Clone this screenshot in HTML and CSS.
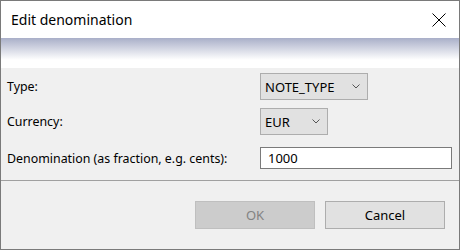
FILE: index.html
```html
<!DOCTYPE html>
<html lang="en">
<head>
    <meta charset="UTF-8">
    <title>Edit denomination</title>
    <link rel="stylesheet" href="styles.css">
</head>
<body>
    <div class="window">
        <div class="titlebar">
            <span class="title">Edit denomination</span>
            <svg class="close" width="14" height="14" viewBox="0 0 14 14">
                <path d="M0.5 0.5 L13.5 13.5 M13.5 0.5 L0.5 13.5" stroke="#000" stroke-width="1" fill="none"/>
            </svg>
        </div>
        <div class="banner"></div>

        <div class="form">
            <div class="row row-type">
                <label>Type:</label>
                <div class="select select-type">
                    <span>NOTE_TYPE</span>
                    <svg width="8" height="5" viewBox="0 0 8 5"><path d="M0.5 0.5 L4 4 L7.5 0.5" stroke="#555" fill="none"/></svg>
                </div>
            </div>
            <div class="row row-currency">
                <label>Currency:</label>
                <div class="select select-currency">
                    <span>EUR</span>
                    <svg width="8" height="5" viewBox="0 0 8 5"><path d="M0.5 0.5 L4 4 L7.5 0.5" stroke="#555" fill="none"/></svg>
                </div>
            </div>
            <div class="row row-denom">
                <label>Denomination (as fraction, e.g. cents):</label>
                <div class="textbox">1000</div>
            </div>
        </div>

        <div class="footer">
            <div class="button disabled">OK</div>
            <div class="button">Cancel</div>
        </div>
    </div>
</body>
</html>
```

FILE: styles.css
```css
body {
    margin: 0;
    font-family: "Noto Sans", sans-serif;
    color: #000;
}
.window {
    width: 460px;
    height: 250px;
    box-sizing: border-box;
    border: 1px solid #7a7a7a;
    background-color: #f0f0f0;
    display: flex;
    flex-direction: column;
}
.titlebar {
    height: 37px;
    background: white;
    display: flex;
    align-items: center;
    justify-content: space-between;
    padding: 0 13px 0 10px;
}
.title {
    font-size: 14px;
    margin-top: -1px;
}
.close {
    margin-top: 1px;
}
.banner {
    height: 30px;
    background: linear-gradient(#a9afc8, #ffffff 22px);
}
.form {
    height: 113px;
    box-sizing: border-box;
    padding: 5px 7px 0 6px;
    border-bottom: 1px solid #a0a0a0;
    font-size: 12.4px;
}
.row {
    display: flex;
    align-items: center;
}
.row label {
    width: 253px;
}
.row-type {
    height: 27px;
}
.row-currency {
    height: 27px;
    margin-top: 8px;
}
.row-denom {
    height: 22px;
    margin-top: 12px;
}
.select {
    height: 27px;
    box-sizing: border-box;
    border: 1px solid #adadad;
    background-color: #e1e1e1;
    display: flex;
    align-items: center;
    justify-content: space-between;
    padding: 0 7px 0 4px;
    font-size: 13px;
}
.select-type {
    width: 108px;
}
.select-currency {
    width: 68px;
}
.textbox {
    flex: 1;
    height: 22px;
    box-sizing: border-box;
    border: 1px solid #7a7a7a;
    background: white;
    padding: 0 7px;
    display: flex;
    align-items: center;
    font-size: 13px;
}
.footer {
    flex: 1;
    display: flex;
    justify-content: flex-end;
    align-items: flex-start;
    gap: 10px;
    padding: 20px 14px 0 0;
}
.button {
    width: 120px;
    height: 28px;
    box-sizing: border-box;
    border: 1px solid #adadad;
    background-color: #e1e1e1;
    display: flex;
    align-items: center;
    justify-content: center;
    font-size: 13px;
}
.button.disabled {
    background-color: #cccccc;
    border-color: #bfbfbf;
    color: #838383;
}
```
